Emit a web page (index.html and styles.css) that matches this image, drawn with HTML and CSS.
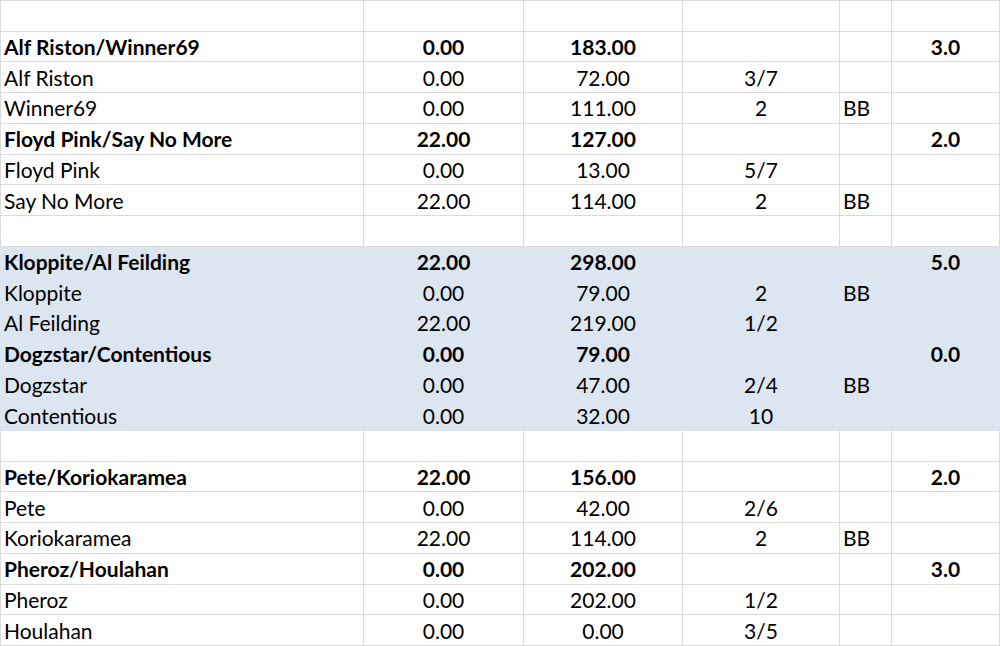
FILE: index.html
```html
<!DOCTYPE html>
<html>
<head>
<meta charset="utf-8">
<link rel="stylesheet" href="styles.css">
</head>
<body>
<div class="sheet">
  <div class="row"><div class="c"></div><div class="c"></div><div class="c"></div><div class="c"></div><div class="c"></div><div class="c"></div></div>
  <div class="row b"><div class="c">Alf Riston/Winner69</div><div class="c n">0.00</div><div class="c n">183.00</div><div class="c n"></div><div class="c"></div><div class="c n">3.0</div></div>
  <div class="row"><div class="c">Alf Riston</div><div class="c n">0.00</div><div class="c n">72.00</div><div class="c n">3/7</div><div class="c"></div><div class="c n"></div></div>
  <div class="row"><div class="c">Winner69</div><div class="c n">0.00</div><div class="c n">111.00</div><div class="c n">2</div><div class="c">BB</div><div class="c n"></div></div>
  <div class="row b"><div class="c">Floyd Pink/Say No More</div><div class="c n">22.00</div><div class="c n">127.00</div><div class="c n"></div><div class="c"></div><div class="c n">2.0</div></div>
  <div class="row"><div class="c">Floyd Pink</div><div class="c n">0.00</div><div class="c n">13.00</div><div class="c n">5/7</div><div class="c"></div><div class="c n"></div></div>
  <div class="row"><div class="c">Say No More</div><div class="c n">22.00</div><div class="c n">114.00</div><div class="c n">2</div><div class="c">BB</div><div class="c n"></div></div>
  <div class="row"><div class="c"></div><div class="c"></div><div class="c"></div><div class="c"></div><div class="c"></div><div class="c"></div></div>
  <div class="row b hl"><div class="c">Kloppite/Al Feilding</div><div class="c n">22.00</div><div class="c n">298.00</div><div class="c n"></div><div class="c"></div><div class="c n">5.0</div></div>
  <div class="row hl"><div class="c">Kloppite</div><div class="c n">0.00</div><div class="c n">79.00</div><div class="c n">2</div><div class="c">BB</div><div class="c n"></div></div>
  <div class="row hl"><div class="c">Al Feilding</div><div class="c n">22.00</div><div class="c n">219.00</div><div class="c n">1/2</div><div class="c"></div><div class="c n"></div></div>
  <div class="row b hl"><div class="c">Dogzstar/Contentious</div><div class="c n">0.00</div><div class="c n">79.00</div><div class="c n"></div><div class="c"></div><div class="c n">0.0</div></div>
  <div class="row hl"><div class="c">Dogzstar</div><div class="c n">0.00</div><div class="c n">47.00</div><div class="c n">2/4</div><div class="c">BB</div><div class="c n"></div></div>
  <div class="row hl"><div class="c">Contentious</div><div class="c n">0.00</div><div class="c n">32.00</div><div class="c n">10</div><div class="c"></div><div class="c n"></div></div>
  <div class="row"><div class="c"></div><div class="c"></div><div class="c"></div><div class="c"></div><div class="c"></div><div class="c"></div></div>
  <div class="row b"><div class="c">Pete/Koriokaramea</div><div class="c n">22.00</div><div class="c n">156.00</div><div class="c n"></div><div class="c"></div><div class="c n">2.0</div></div>
  <div class="row"><div class="c">Pete</div><div class="c n">0.00</div><div class="c n">42.00</div><div class="c n">2/6</div><div class="c"></div><div class="c n"></div></div>
  <div class="row"><div class="c">Koriokaramea</div><div class="c n">22.00</div><div class="c n">114.00</div><div class="c n">2</div><div class="c">BB</div><div class="c n"></div></div>
  <div class="row b"><div class="c">Pheroz/Houlahan</div><div class="c n">0.00</div><div class="c n">202.00</div><div class="c n"></div><div class="c"></div><div class="c n">3.0</div></div>
  <div class="row"><div class="c">Pheroz</div><div class="c n">0.00</div><div class="c n">202.00</div><div class="c n">1/2</div><div class="c"></div><div class="c n"></div></div>
  <div class="row"><div class="c">Houlahan</div><div class="c n">0.00</div><div class="c n">0.00</div><div class="c n">3/5</div><div class="c"></div><div class="c n"></div></div>
</div>
</body>
</html>
```
FILE: styles.css
```css
* { box-sizing: border-box; }
html, body { margin: 0; padding: 0; background: #fff; }
body {
  font-family: Lato, "Liberation Sans", sans-serif;
  font-size: 21px;
  color: #000;
}
.sheet {
  width: 1000px;
  height: 646px;
  display: grid;
  grid-template-rows: repeat(21, 1fr);
  border-top: 1px solid #dadada;
  overflow: hidden;
}
.row {
  display: grid;
  grid-template-columns: 364px 160px 159px 157px 52px 108px;
}
.c {
  border-right: 1px solid #dadada;
  border-bottom: 1px solid #dadada;
  padding: 0 4px 0 3px;
  display: flex;
  align-items: center;
  white-space: nowrap;
  overflow: hidden;
}
.c:first-child { border-left: 1px solid #dadada; }
.c.n { justify-content: center; padding-left: 0; padding-right: 0; }
.b .c { font-weight: 700; }
.hl { background: #dce6f1; }
.hl .c { border-color: #dce6f1; }
```
